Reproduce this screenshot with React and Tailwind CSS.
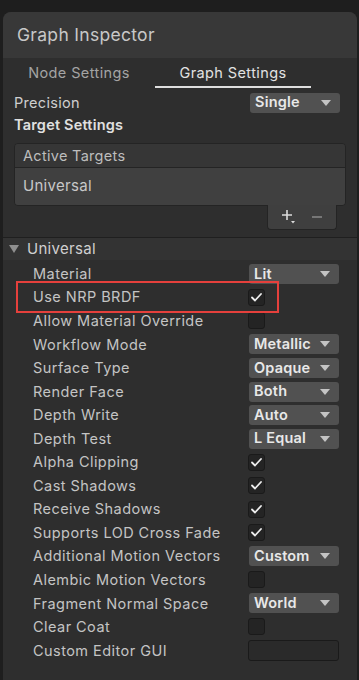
import React from 'react';

const font = { fontFamily: 'Inter, "Noto Sans", sans-serif' };

const Dropdown = ({ value }) => (
    <div className="w-[90px] h-[20px] rounded-[3px] bg-[#515151] flex items-center justify-between pl-[5px] pr-[9px]">
        <span className="text-[14.5px] font-semibold text-[#e8e8e8] leading-none tracking-[0.2px]">{value}</span>
        <svg width="10" height="6" viewBox="0 0 10 6"><path d="M0 0 L10 0 L5 6 Z" fill="#c4c4c4" /></svg>
    </div>
);

const Checkbox = ({ checked }) => (
    <div className="w-[17px] h-[17px] rounded-[3px] bg-[#242424] border border-[#1a1a1a] flex items-center justify-center">
        {checked && (
            <svg width="11" height="9" viewBox="0 0 11 9">
                <path d="M1 4.5 L4 7.5 L10 1" stroke="#eeeeee" strokeWidth="1.8" fill="none" strokeLinecap="round" strokeLinejoin="round" />
            </svg>
        )}
    </div>
);

const rows = [
    { label: 'Material', dd: 'Lit' },
    { label: 'Use NRP BRDF', cb: true },
    { label: 'Allow Material Override', cb: false },
    { label: 'Workflow Mode', dd: 'Metallic' },
    { label: 'Surface Type', dd: 'Opaque' },
    { label: 'Render Face', dd: 'Both' },
    { label: 'Depth Write', dd: 'Auto' },
    { label: 'Depth Test', dd: 'L Equal' },
    { label: 'Alpha Clipping', cb: true },
    { label: 'Cast Shadows', cb: true },
    { label: 'Receive Shadows', cb: true },
    { label: 'Supports LOD Cross Fade', cb: true },
    { label: 'Additional Motion Vectors', dd: 'Custom' },
    { label: 'Alembic Motion Vectors', cb: false },
    { label: 'Fragment Normal Space', dd: 'World' },
    { label: 'Clear Coat', cb: false },
    { label: 'Custom Editor GUI', field: true },
];

export default function App() {
    return (
        <div className="w-[359px] h-[680px] bg-[#1e1e1e] pt-[12px] pl-[3px] pr-[2px] overflow-hidden" style={font}>
            <div className="h-[668px] rounded-t-[8px] bg-[#2e2e2e] overflow-hidden">
                {/* Header */}
                <div className="h-[46px] bg-[#383838] flex items-center pl-[14px]">
                    <span className="text-[17.5px] text-[#c8c8c8] tracking-[0.3px]">Graph Inspector</span>
                </div>

                {/* Tabs */}
                <div className="h-[30px] flex">
                    <div className="w-[152px] flex items-center justify-center text-[14.5px] tracking-[0.4px] text-[#a4a4a4]">Node Settings</div>
                    <div className="w-[156px] flex items-center justify-center text-[14.5px] tracking-[0.4px] text-[#e2e2e2] border-b-2 border-[#dedede] pt-[2px]">Graph Settings</div>
                </div>

                {/* Precision */}
                <div className="h-[23px] mt-[3px] flex items-center justify-between pl-[11px] pr-[17px]">
                    <span className="text-[14.5px] tracking-[0.3px] text-[#cfcfcf]">Precision</span>
                    <Dropdown value="Single" />
                </div>
                <div className="h-[22px] flex items-center pl-[11px]">
                    <span className="text-[14.5px] tracking-[0.2px] font-semibold text-[#e0e0e0]">Target Settings</span>
                </div>

                {/* Active Targets */}
                <div className="mx-[11px] mt-[7px] rounded-[4px] border border-[#242424] overflow-hidden">
                    <div className="h-[24px] bg-[#363636] border-b border-[#242424] flex items-center pl-[8px]">
                        <span className="text-[14.5px] tracking-[0.3px] text-[#bdbdbd]">Active Targets</span>
                    </div>
                    <div className="h-[37px] bg-[#404040] flex items-center pl-[8px]">
                        <span className="text-[15px] tracking-[0.3px] text-[#c8c8c8]">Universal</span>
                    </div>
                </div>
                <div className="flex justify-end pr-[20px]">
                    <div className="w-[70px] h-[25px] -mt-px bg-[#3f3f3f] border border-t-0 border-[#242424] rounded-b-[4px] flex items-center justify-around px-[6px]">
                        <svg width="16" height="16" viewBox="0 0 16 16">
                            <path d="M6 1 V11 M1 6 H11" stroke="#dcdcdc" strokeWidth="1.6" />
                            <path d="M10 12 L14 12 L12 14.5 Z" fill="#dcdcdc" />
                        </svg>
                        <svg width="12" height="4" viewBox="0 0 12 4">
                            <path d="M1 2 H11" stroke="#8a8a8a" strokeWidth="1.6" />
                        </svg>
                    </div>
                </div>

                {/* Section */}
                <div className="mt-[7px] border-t border-[#1f1f1f] h-[23px] bg-[#333333] flex items-center pl-[6px]">
                    <svg width="10" height="8" viewBox="0 0 10 8"><path d="M0 0 L10 0 L5 8 Z" fill="#8f8f8f" /></svg>
                    <span className="ml-[8px] text-[15px] tracking-[0.3px] text-[#d0d0d0]">Universal</span>
                </div>

                <div className="relative mt-[2px]">
                    {rows.map((r) => (
                        <div key={r.label} className="h-[23.56px] flex items-center pl-[30px] pr-[17px]">
                            <span className="flex-1 text-[14.5px] text-[#c4c4c4] tracking-[0.45px]">{r.label}</span>
                            <div className="w-[91px] flex items-center">
                                {r.dd && <Dropdown value={r.dd} />}
                                {r.cb !== undefined && <div className="-ml-px"><Checkbox checked={r.cb} /></div>}
                                {r.field && <div className="-ml-px w-[91px] h-[21px] rounded-[3px] bg-[#2a2a2a] border border-[#1a1a1a]" />}
                            </div>
                        </div>
                    ))}
                    {/* highlight annotation */}
                    <div className="absolute left-[13px] top-[19px] w-[263px] h-[32px] border-2 border-[#e5403c] pointer-events-none" />
                </div>
            </div>
        </div>
    );
}
